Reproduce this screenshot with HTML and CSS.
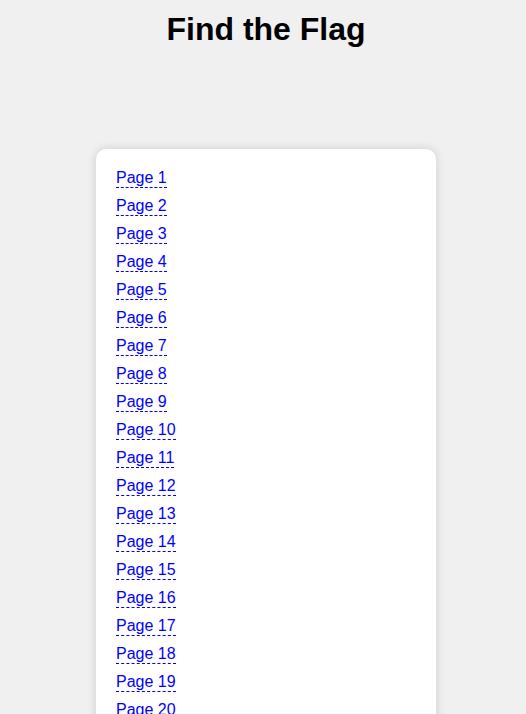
FILE: index.html
```html
<!DOCTYPE html>
<html>
<head>
<meta charset="utf-8">
<title>Find the Flag</title>
<link rel="stylesheet" href="styles.css">
</head>
<body>
<h1 class="title">Find the Flag</h1>
<div class="card">
  <a class="page-link" href="#">Page 1</a>
  <a class="page-link" href="#">Page 2</a>
  <a class="page-link" href="#">Page 3</a>
  <a class="page-link" href="#">Page 4</a>
  <a class="page-link" href="#">Page 5</a>
  <a class="page-link" href="#">Page 6</a>
  <a class="page-link" href="#">Page 7</a>
  <a class="page-link" href="#">Page 8</a>
  <a class="page-link" href="#">Page 9</a>
  <a class="page-link" href="#">Page 10</a>
  <a class="page-link" href="#">Page 11</a>
  <a class="page-link" href="#">Page 12</a>
  <a class="page-link" href="#">Page 13</a>
  <a class="page-link" href="#">Page 14</a>
  <a class="page-link" href="#">Page 15</a>
  <a class="page-link" href="#">Page 16</a>
  <a class="page-link" href="#">Page 17</a>
  <a class="page-link" href="#">Page 18</a>
  <a class="page-link" href="#">Page 19</a>
  <a class="page-link" href="#">Page 20</a>
  <a class="page-link" href="#">Page 21</a>
  <a class="page-link" href="#">Page 22</a>
  <a class="page-link" href="#">Page 23</a>
  <a class="page-link" href="#">Page 24</a>
  <a class="page-link" href="#">Page 25</a>
</div>
</body>
</html>
```
FILE: styles.css
```css
html, body {
  margin: 0;
  padding: 0;
}
body {
  background: #f0f0f0;
  font-family: "Liberation Sans", Arial, sans-serif;
  padding: 11px 0 0 6px;
  display: flex;
  flex-direction: column;
  align-items: center;
}
.title {
  margin: 0;
  font-size: 32px;
  font-weight: bold;
  color: #000;
  line-height: 37px;
}
.card {
  margin-top: 101px;
  width: 300px;
  padding: 20px;
  background: #fff;
  border-radius: 10px;
  box-shadow: 0 0 10px rgba(0, 0, 0, 0.15);
  display: flex;
  flex-direction: column;
  align-items: flex-start;
  gap: 9px;
}
.page-link {
  color: #0000ff;
  text-decoration: none;
  font-size: 16px;
  line-height: 18px;
  border-bottom: 1px dashed #0000ff;
}
```
